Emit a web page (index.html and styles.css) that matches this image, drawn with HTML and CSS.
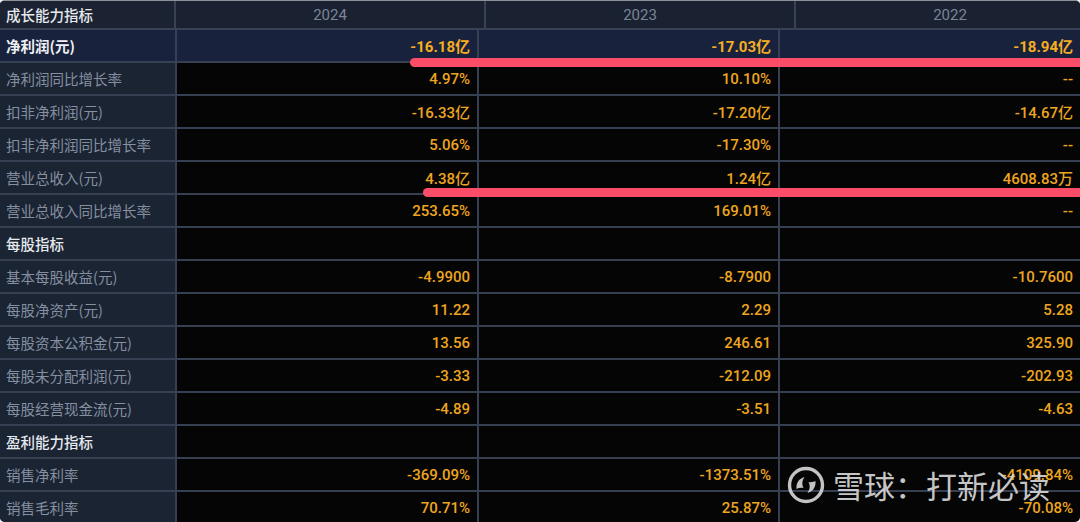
FILE: index.html
```html
<!DOCTYPE html>
<html lang="zh">
<head>
<meta charset="utf-8">
<link rel="stylesheet" href="styles.css">
</head>
<body>
<div class="board">
  <div class="head">
    <div class="hcell label section">成长能力指标</div>
    <div class="hcell year">2024</div>
    <div class="hcell year">2023</div>
    <div class="hcell year">2022</div>
  </div>
  <div class="row hl">
    <div class="cell label strong">净利润(元)</div>
    <div class="cell val b">-16.18亿</div>
    <div class="cell val b">-17.03亿</div>
    <div class="cell val b">-18.94亿</div>
  </div>
  <div class="row">
    <div class="cell label">净利润同比增长率</div>
    <div class="cell val">4.97%</div>
    <div class="cell val">10.10%</div>
    <div class="cell val">--</div>
  </div>
  <div class="row">
    <div class="cell label">扣非净利润(元)</div>
    <div class="cell val">-16.33亿</div>
    <div class="cell val">-17.20亿</div>
    <div class="cell val">-14.67亿</div>
  </div>
  <div class="row">
    <div class="cell label">扣非净利润同比增长率</div>
    <div class="cell val">5.06%</div>
    <div class="cell val">-17.30%</div>
    <div class="cell val">--</div>
  </div>
  <div class="row">
    <div class="cell label">营业总收入(元)</div>
    <div class="cell val">4.38亿</div>
    <div class="cell val">1.24亿</div>
    <div class="cell val">4608.83万</div>
  </div>
  <div class="row">
    <div class="cell label">营业总收入同比增长率</div>
    <div class="cell val">253.65%</div>
    <div class="cell val">169.01%</div>
    <div class="cell val">--</div>
  </div>
  <div class="row">
    <div class="cell label section">每股指标</div>
    <div class="cell val"></div>
    <div class="cell val"></div>
    <div class="cell val"></div>
  </div>
  <div class="row">
    <div class="cell label">基本每股收益(元)</div>
    <div class="cell val">-4.9900</div>
    <div class="cell val">-8.7900</div>
    <div class="cell val">-10.7600</div>
  </div>
  <div class="row">
    <div class="cell label">每股净资产(元)</div>
    <div class="cell val">11.22</div>
    <div class="cell val">2.29</div>
    <div class="cell val">5.28</div>
  </div>
  <div class="row">
    <div class="cell label">每股资本公积金(元)</div>
    <div class="cell val">13.56</div>
    <div class="cell val">246.61</div>
    <div class="cell val">325.90</div>
  </div>
  <div class="row">
    <div class="cell label">每股未分配利润(元)</div>
    <div class="cell val">-3.33</div>
    <div class="cell val">-212.09</div>
    <div class="cell val">-202.93</div>
  </div>
  <div class="row">
    <div class="cell label">每股经营现金流(元)</div>
    <div class="cell val">-4.89</div>
    <div class="cell val">-3.51</div>
    <div class="cell val">-4.63</div>
  </div>
  <div class="row">
    <div class="cell label section">盈利能力指标</div>
    <div class="cell val"></div>
    <div class="cell val"></div>
    <div class="cell val"></div>
  </div>
  <div class="row">
    <div class="cell label">销售净利率</div>
    <div class="cell val">-369.09%</div>
    <div class="cell val">-1373.51%</div>
    <div class="cell val">-4109.84%</div>
  </div>
  <div class="row">
    <div class="cell label">销售毛利率</div>
    <div class="cell val">70.71%</div>
    <div class="cell val">25.87%</div>
    <div class="cell val">-70.08%</div>
  </div>

  <div class="mark mark-1"></div>
  <div class="mark mark-2"></div>

  <div class="watermark">
    <svg class="wm-logo" width="40" height="40" viewBox="0 0 40 40">
      <circle cx="20" cy="20" r="16.5" fill="none" stroke="#d4d4d4" stroke-width="3.4"/>
      <path d="M10.5 24 C10 18 13 13.5 18.5 12 C16 15.5 15.5 19.5 17.5 23 C15 22.5 12.5 23 10.5 24 Z" fill="#d4d4d4"/>
      <path d="M29.5 16 C30 22 27 26.5 21.5 28 C24 24.5 24.5 20.5 22.5 17 C25 17.5 27.5 17 29.5 16 Z" fill="#d4d4d4"/>
    </svg>
    <span class="wm-text">雪球：打新必读</span>
  </div>
</div>
</body>
</html>
```
FILE: styles.css
```css
* { box-sizing: border-box; margin: 0; padding: 0; }
html, body { width: 1080px; height: 522px; overflow: hidden; }
body {
  background: #eeeeee;
  font-family: "Noto Sans CJK SC", "Noto Sans", sans-serif;
}
.board {
  position: relative;
  width: 1080px;
  height: 522px;
  background: #050505;
  border-radius: 5px;
  overflow: hidden;
  border-top: 1px solid #8d929a;
}
.head {
  display: flex;
  height: 29px;
  background: #1a2130;
  border-bottom: 2px solid #394154;
  overflow: hidden;
}
.hcell {
  flex: none;
  display: flex;
  align-items: center;
  border-right: 2px solid #394154;
}
.hcell.label { width: 176px; padding-left: 6px; background: #1b2332; }
.hcell.year {
  width: 310px;
  justify-content: center;
  color: #7a8599;
  font-family: "Roboto", "Noto Sans", sans-serif;
  font-size: 15px;
}
.row {
  display: grid;
  grid-template-columns: 177px 302px 301px 300px;
  height: 33px;
  border-bottom: 2px solid #373f52;
}
.cell {
  display: flex;
  align-items: center;
  border-right: 2px solid #373f52;
  overflow: hidden;
  white-space: nowrap;
}
.cell:last-child { border-right: none; }
.label {
  background: #1b2433;
  color: #858fa0;
  font-size: 14.5px;
  padding-left: 6px;
}
.label.section { color: #e6e9ee; font-weight: 500; }
.label.strong { color: #eef0f4; font-weight: 700; }
.val {
  justify-content: flex-end;
  padding-right: 7px;
  color: #eea51f;
  font-family: "Roboto", "Noto Sans CJK SC", sans-serif;
  font-size: 15px;
  font-weight: 500;
}
.val.b { font-weight: 700; color: #f5ad22; }
.row.hl .cell { background: #19223d; }

.mark {
  position: absolute;
  right: -10px;
  height: 9px;
  border-radius: 5px;
  background: #fb4d68;
}
.mark-1 { left: 410px; top: 57px; }
.mark-2 { left: 423px; top: 187px; }

.watermark {
  position: absolute;
  left: 786px;
  top: 464px;
  display: flex;
  align-items: center;
  gap: 7px;
  opacity: 0.92;
}
.wm-logo { display: block; }
.wm-text {
  color: #d6d6d6;
  font-size: 31px;
  line-height: 40px;
  font-family: "Noto Sans CJK SC", sans-serif;
}
```
